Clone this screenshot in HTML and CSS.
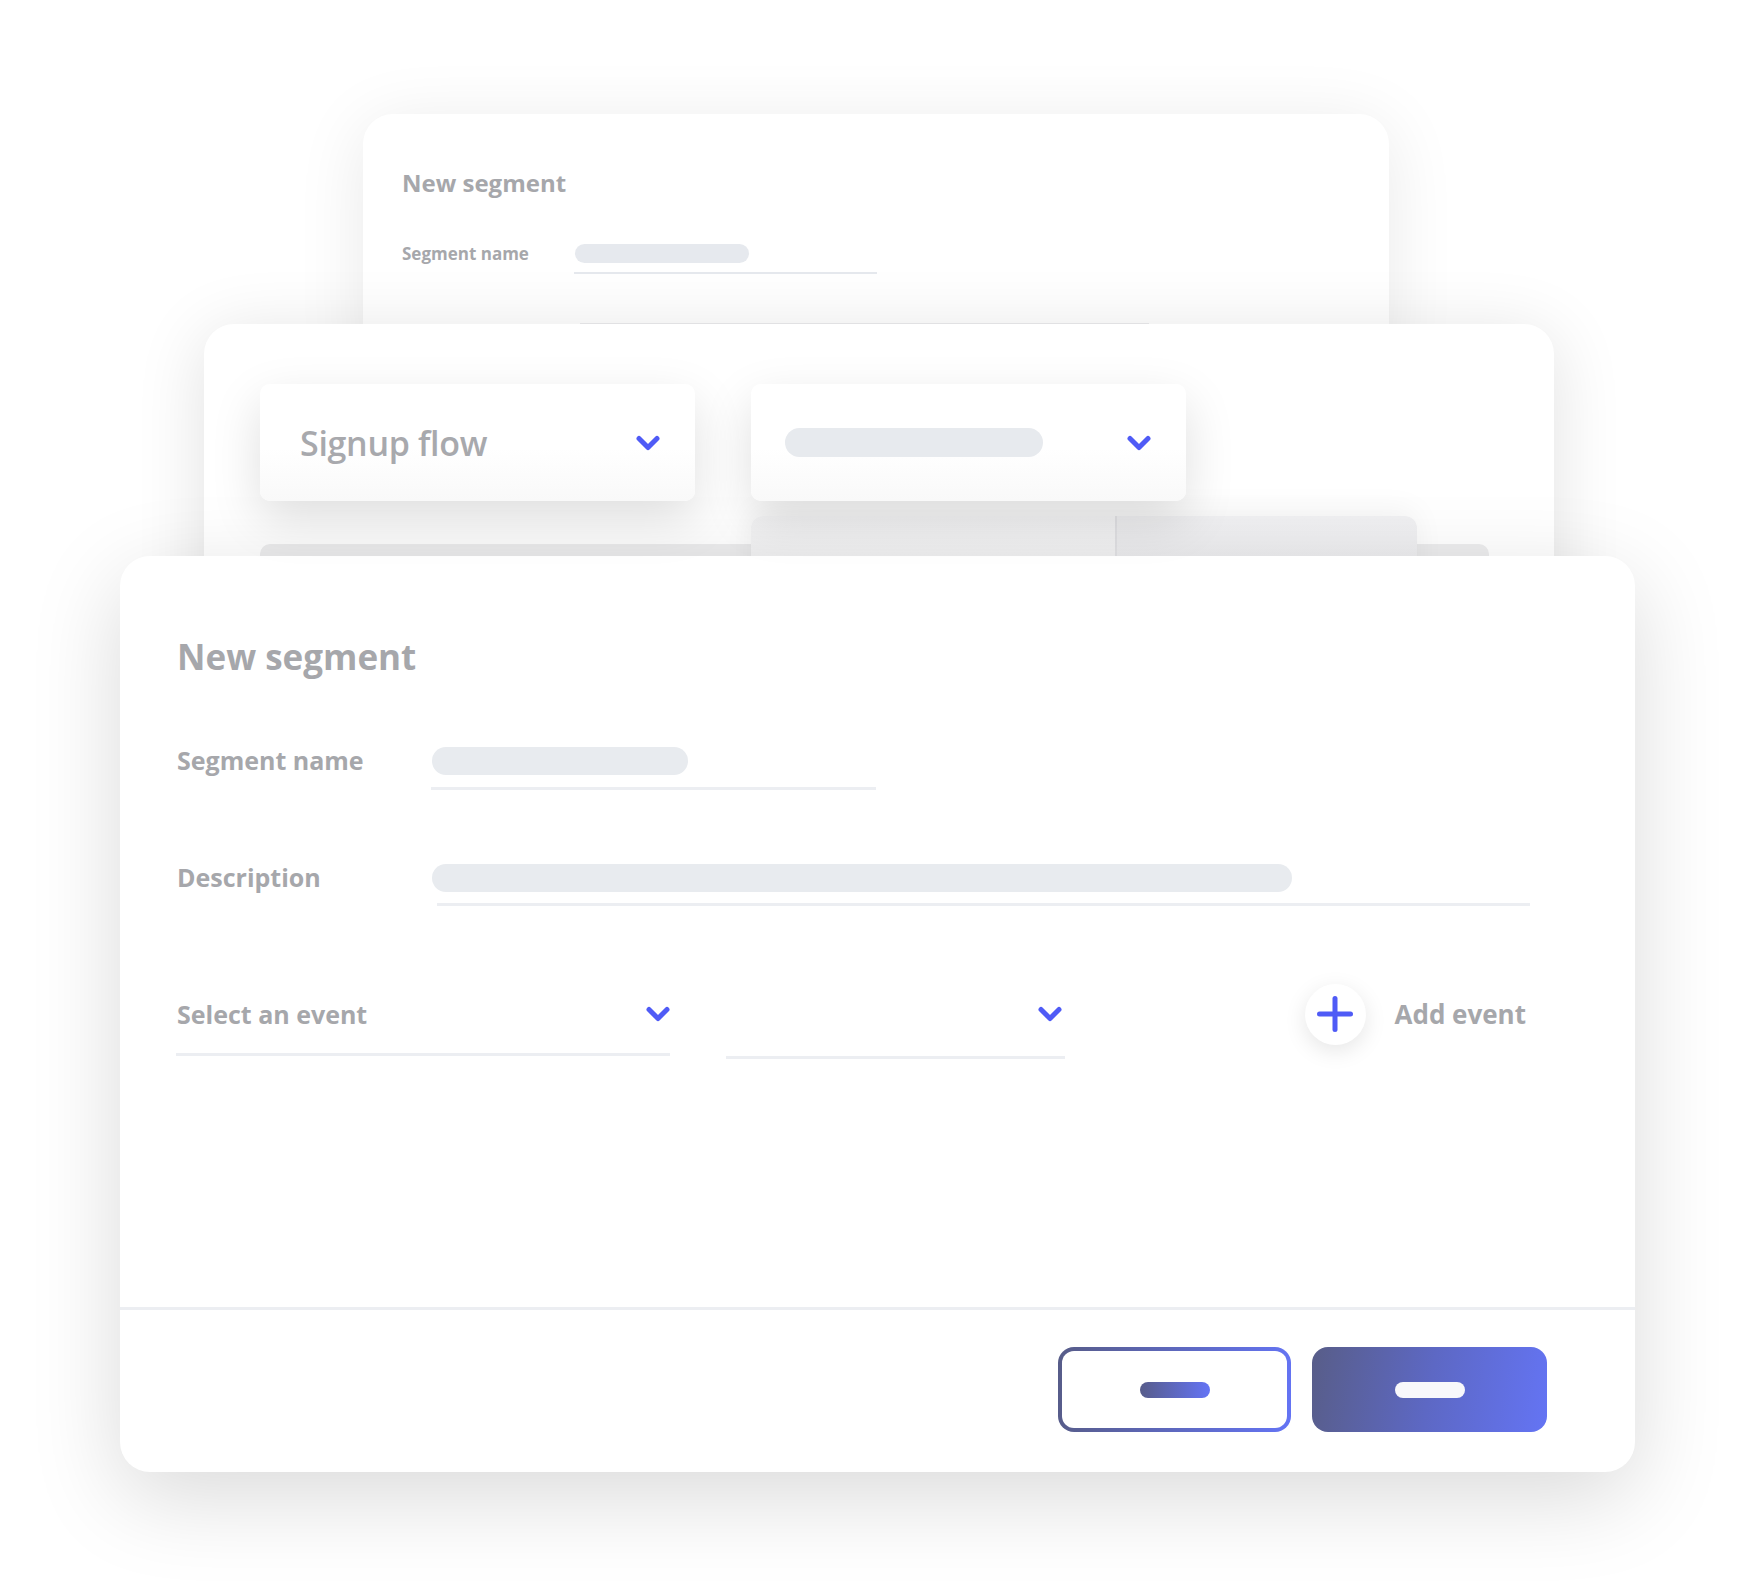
FILE: index.html
```html
<!DOCTYPE html>
<html lang="en">
<head>
<meta charset="utf-8">
<title>New segment</title>
<link rel="stylesheet" href="styles.css">
</head>
<body>
<div class="stage">

  <section class="card card-back">
    <h2 class="back-title">New segment</h2>
    <div class="back-row">
      <span class="back-label">Segment name</span>
      <div class="back-field">
        <div class="back-bar"></div>
        <div class="back-underline"></div>
      </div>
    </div>
    <div class="back-line"></div>
  </section>

  <section class="card card-mid">
    <div class="dd-row">
      <div class="dropdown">
        <span class="dd-text">Signup flow</span>
        <svg class="chev" viewBox="0 0 24 16"><polyline points="3,3.5 12,12.5 21,3.5"/></svg>
      </div>
      <div class="dropdown">
        <div class="dd-bar"></div>
        <svg class="chev" viewBox="0 0 24 16"><polyline points="3,3.5 12,12.5 21,3.5"/></svg>
      </div>
    </div>
    <div class="strip">
      <div class="strip-card">
        <div class="sc-left"></div>
        <div class="sc-right"></div>
      </div>
    </div>
  </section>

  <section class="card card-main">
    <div class="main-body">
      <h1 class="main-title">New segment</h1>
      <div class="form-row row-name">
        <span class="label">Segment name</span>
        <div class="field">
          <div class="bar bar-name"></div>
          <div class="underline ul-name"></div>
        </div>
      </div>
      <div class="form-row row-desc">
        <span class="label">Description</span>
        <div class="field">
          <div class="bar bar-desc"></div>
          <div class="underline ul-desc"></div>
        </div>
      </div>
      <div class="event-row">
        <div class="select select-event">
          <div class="select-top">
            <span class="label">Select an event</span>
            <svg class="chev" viewBox="0 0 24 16"><polyline points="3,3.5 12,12.5 21,3.5"/></svg>
          </div>
          <div class="underline"></div>
        </div>
        <div class="select select-second">
          <div class="select-top">
            <span></span>
            <svg class="chev" viewBox="0 0 24 16"><polyline points="3,3.5 12,12.5 21,3.5"/></svg>
          </div>
          <div class="underline"></div>
        </div>
        <div class="add-event">
          <span class="plus-circle">
            <svg viewBox="0 0 36 36"><line x1="18" y1="2.5" x2="18" y2="33.5"/><line x1="2.5" y1="18" x2="33.5" y2="18"/></svg>
          </span>
          <span class="label">Add event</span>
        </div>
      </div>
    </div>
    <div class="divider"></div>
    <div class="footer">
      <button class="btn btn-outline"><span class="pill pill-grad"></span></button>
      <button class="btn btn-fill"><span class="pill pill-white"></span></button>
    </div>
  </section>

</div>
</body>
</html>
```

FILE: styles.css
```css
* { box-sizing: border-box; }

html, body {
  margin: 0;
  padding: 0;
  background: #ffffff;
}

body {
  font-family: "Open Sans", "Noto Sans", sans-serif;
  color: #a6a7ab;
  overflow: hidden;
}

.stage {
  position: relative;
  width: 1755px;
  height: 1596px;
  overflow: hidden;
  background: #ffffff;
}

.card {
  position: absolute;
  background: #ffffff;
  border-radius: 30px;
}

/* ---------- back card ---------- */
.card-back {
  left: 363px;
  top: 114px;
  width: 1026px;
  height: 260px;
  padding: 57px 0 0 39px;
  box-shadow: 0 10px 70px rgba(0, 0, 0, 0.09);
}

.back-title {
  margin: 0;
  font-size: 24px;
  line-height: 24px;
  font-weight: 700;
  color: #a6a7ab;
}

.back-row {
  display: flex;
  align-items: flex-start;
  margin-top: 49px;
}

.back-label {
  width: 172px;
  font-size: 17px;
  line-height: 19px;
  font-weight: 700;
  color: #a6a7ab;
}

.back-field {
  display: flex;
  flex-direction: column;
}

.back-bar {
  width: 174px;
  height: 19px;
  border-radius: 10px;
  background: #e6e9ee;
  margin-left: 1px;
}

.back-underline {
  width: 303px;
  height: 2px;
  margin-top: 9px;
  background: #e6e9ee;
}

.back-line {
  width: 569px;
  height: 2px;
  margin: 49px 0 0 178px;
  background: #ececee;
}

/* ---------- middle card ---------- */
.card-mid {
  left: 204px;
  top: 324px;
  width: 1350px;
  height: 320px;
  padding: 60px 0 0 56px;
  box-shadow: 0 10px 70px rgba(0, 0, 0, 0.12);
}

.dd-row {
  display: flex;
  gap: 56px;
}

.dropdown {
  position: relative;
  z-index: 2;
  width: 435px;
  height: 117px;
  border-radius: 10px;
  background: linear-gradient(180deg, #ffffff 0%, #ffffff 55%, #f9f9f9 100%);
  box-shadow: 0 18px 50px rgba(0, 0, 0, 0.13);
  display: flex;
  align-items: center;
  justify-content: space-between;
  padding: 0 35px 0 40px;
}

.dropdown:nth-child(2) {
  padding-left: 34px;
}

.dd-text {
  font-size: 34px;
  line-height: 34px;
  font-weight: 600;
  letter-spacing: -0.3px;
  color: #a8a9ad;
}

.dd-bar {
  width: 258px;
  height: 29px;
  border-radius: 15px;
  background: #e7eaee;
}

.chev {
  width: 24px;
  height: 16px;
  flex: none;
}

.chev polyline {
  fill: none;
  stroke: #4f5bf6;
  stroke-width: 5;
  stroke-linecap: round;
  stroke-linejoin: round;
}

.strip {
  width: 1229px;
  height: 60px;
  margin-top: 43px;
  border-radius: 10px 10px 0 0;
  background: #ededee;
}

.strip-card {
  position: relative;
  top: -28px;
  margin-left: 491px;
  width: 666px;
  height: 90px;
  display: flex;
  border-radius: 12px 12px 0 0;
  overflow: hidden;
  box-shadow: 0 -6px 30px rgba(0, 0, 0, 0.05);
}

.sc-left {
  width: 366px;
  background: linear-gradient(180deg, #f5f5f6 0%, #f0f0f1 100%);
  border-right: 2px solid #e3e3e6;
}

.sc-right {
  flex: 1;
  background: linear-gradient(180deg, #efeff1 0%, #ebebed 100%);
}

/* ---------- main card ---------- */
.card-main {
  left: 120px;
  top: 556px;
  width: 1515px;
  height: 916px;
  display: flex;
  flex-direction: column;
  box-shadow: 0 25px 90px rgba(0, 0, 0, 0.15);
}

.main-body {
  flex: 1;
  padding: 83px 109px 0 57px;
}

.main-title {
  margin: 0;
  font-size: 35px;
  line-height: 35px;
  font-weight: 700;
  color: #a6a7ab;
}

.form-row {
  display: flex;
  align-items: flex-start;
}

.row-name { margin-top: 73px; }
.row-desc { margin-top: 74px; }

.form-row .label {
  width: 255px;
  flex: none;
  line-height: 26px;
}

.label {
  font-size: 25px;
  font-weight: 700;
  color: #a6a7ab;
  white-space: nowrap;
}

.field {
  display: flex;
  flex-direction: column;
}

.bar {
  height: 28px;
  border-radius: 14px;
  background: #e8ebef;
}

.bar-name { width: 256px; }
.bar-desc { width: 860px; }

.underline {
  height: 3px;
  background: #eceef2;
}

.ul-name {
  width: 445px;
  margin-top: 12px;
  margin-left: -1px;
}

.ul-desc {
  width: 1093px;
  margin-top: 11px;
  margin-left: 5px;
}

.event-row {
  display: flex;
  align-items: flex-start;
  margin-top: 88px;
}

.select {
  display: flex;
  flex-direction: column;
}

.select-event { width: 494px; margin-left: -1px; }
.select-second { width: 339px; margin-left: 56px; }

.select-top {
  height: 40px;
  display: flex;
  align-items: center;
  justify-content: space-between;
  padding-left: 1px;
}

.select-event .select-top { padding-right: 0; }
.select-second .select-top { padding-right: 3px; }

.select .underline { margin-top: 19px; }
.select-second .underline { margin-top: 22px; }

.add-event {
  margin-left: auto;
  height: 40px;
  display: flex;
  align-items: center;
  gap: 29px;
}

.plus-circle {
  width: 61px;
  height: 61px;
  border-radius: 50%;
  background: #ffffff;
  box-shadow: 0 6px 22px rgba(0, 0, 0, 0.10);
  display: flex;
  align-items: center;
  justify-content: center;
  flex: none;
}

.plus-circle svg {
  width: 36px;
  height: 36px;
}

.plus-circle line {
  stroke: #4f5bf6;
  stroke-width: 5;
  stroke-linecap: round;
}

.add-event .label { font-size: 26px; }

.divider {
  height: 3px;
  background: #eceef2;
}

.footer {
  height: 162px;
  display: flex;
  justify-content: flex-end;
  align-items: flex-start;
  gap: 21px;
  padding: 37px 88px 0 0;
}

.btn {
  height: 85px;
  border-radius: 16px;
  display: flex;
  align-items: center;
  justify-content: center;
  padding: 0;
  cursor: pointer;
}

.btn-outline {
  width: 233px;
  border: 4px solid transparent;
  background:
    linear-gradient(#ffffff, #ffffff) padding-box,
    linear-gradient(95deg, #575c88 0%, #6474f5 100%) border-box;
}

.btn-fill {
  width: 235px;
  border: none;
  background: linear-gradient(100deg, #585d88 0%, #5d68c4 50%, #6474f4 100%);
}

.pill {
  width: 70px;
  height: 16px;
  border-radius: 8px;
}

.pill-grad {
  background: linear-gradient(90deg, #575c8a 0%, #6474f5 100%);
}

.pill-white {
  background: #f8f8fb;
}
```
